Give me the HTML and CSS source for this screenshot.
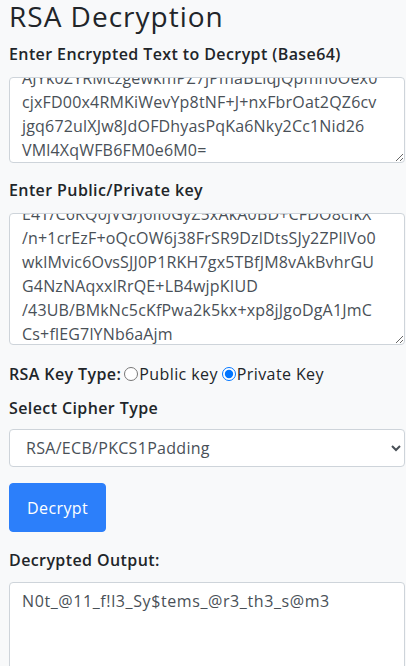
FILE: index.html
```html
<!DOCTYPE html>
<html lang="en">
<head>
<meta charset="utf-8">
<title>RSA Decryption</title>
<link rel="stylesheet" href="styles.css">
</head>
<body>
<main class="page">
  <h1 class="title">RSA Decryption</h1>

  <label class="label label-first" for="cipher">Enter Encrypted Text to Decrypt (Base64)</label>
  <textarea id="cipher" class="field field-cipher scroll" wrap="off" readonly>AJYk0ZYRMczgewkmPZ7jPmaBLiqJQpmn0Oex0
cjxFD00x4RMKiWevYp8tNF+J+nxFbrOat2QZ6cv
jgq672ulXJw8JdOFDhyasPqKa6Nky2Cc1Nid26
VMl4XqWFB6FM0e6M0=</textarea>

  <label class="label label-key" for="key">Enter Public/Private key</label>
  <textarea id="key" class="field field-key scroll" wrap="off" readonly>E4T/C6KQ0jVG/J6II0GyZ5xAkA0BD+CFDO8cIkX
/n+1crEzF+oQcOW6j38FrSR9DzlDtsSJy2ZPllVo0
wklMvic6OvsSJJ0P1RKH7gx5TBfJM8vAkBvhrGU
G4NzNAqxxlRrQE+LB4wjpKIUD
/43UB/BMkNc5cKfPwa2k5kx+xp8jJgoDgA1JmC
Cs+flEG7lYNb6aAjm</textarea>

  <div class="keytype">
    <span class="keytype-label">RSA Key Type:</span>
    <label class="radio"><input type="radio" name="keytype" value="public">Public key</label>
    <label class="radio"><input type="radio" name="keytype" value="private" checked>Private Key</label>
  </div>

  <label class="label label-select" for="cipherType">Select Cipher Type</label>
  <select id="cipherType" class="select">
    <option>RSA/ECB/PKCS1Padding</option>
    <option>RSA/ECB/OAEPWithSHA-1AndMGF1Padding</option>
    <option>RSA/ECB/OAEPWithSHA-256AndMGF1Padding</option>
  </select>

  <button type="button" class="btn">Decrypt</button>

  <label class="label label-output" for="output">Decrypted Output:</label>
  <textarea id="output" class="field field-output" readonly>N0t_@11_f!l3_Sy$tems_@r3_th3_s@m3</textarea>
</main>
<script src="app.js"></script>
</body>
</html>
```

FILE: styles.css
```css
html, body {
  margin: 0;
  padding: 0;
  background: #f8f9fa;
}

body {
  font-family: "Open Sans", "Liberation Sans", sans-serif;
  color: #212529;
  overflow: hidden;
}

.page {
  display: flex;
  flex-direction: column;
  align-items: flex-start;
  padding: 0 1px 0 9px;
}

.title {
  margin: -3px 0 0;
  font-size: 28px;
  font-weight: 500;
  line-height: 38px;
  letter-spacing: 1px;
  color: #212529;
}

.label {
  display: block;
  font-size: 16px;
  font-weight: 600;
  line-height: 24px;
  letter-spacing: 0.4px;
  color: #212529;
}

.label-first { margin: 7px 0 11px; }
.label-key { margin: 15px 0 11px; }
.label-select { margin: 10px 0 9px; }
.label-output { margin: 16px 0 10px; }

.field {
  box-sizing: border-box;
  width: 100%;
  margin: 0;
  padding: 6px 12px;
  border: 1px solid #ced4da;
  border-radius: 4px;
  background: #fff;
  color: #495057;
  font-family: inherit;
  font-size: 16px;
  line-height: 24px;
  letter-spacing: 0.18px;
  resize: vertical;
  overflow: hidden;
  outline: none;
}

.field-cipher { height: 86px; }
.field-key { height: 132px; }
.field-output { height: 120px; letter-spacing: 0.6px; }

.keytype {
  display: flex;
  align-items: center;
  margin-top: 17px;
  font-size: 16px;
  line-height: 24px;
  letter-spacing: 0.4px;
}

.keytype-label {
  font-weight: 600;
  margin-right: 3px;
}

.radio {
  display: flex;
  align-items: center;
  margin-right: 4px;
  color: #212529;
}

.radio input {
  width: 14px;
  height: 14px;
  margin: 0 1px 0 0;
}

.select {
  box-sizing: border-box;
  width: 100%;
  height: 38px;
  padding: 6px 12px;
  border: 1px solid #ced4da;
  border-radius: 4px;
  background-color: #fff;
  color: #495057;
  font-family: inherit;
  font-size: 16px;
  line-height: 24px;
  letter-spacing: 0.3px;
}

.btn {
  margin-top: 16px;
  height: 49px;
  padding: 0 17px;
  border: 1px solid #2c7ffa;
  border-radius: 4px;
  background: #2c7ffa;
  color: #fff;
  font-family: inherit;
  font-size: 16px;
  font-weight: 500;
  line-height: 24px;
  letter-spacing: 0.4px;
}
```

FILE: app.js
```js
document.querySelectorAll('.scroll').forEach(function (el) {
  el.scrollTop = 18;
});
```
